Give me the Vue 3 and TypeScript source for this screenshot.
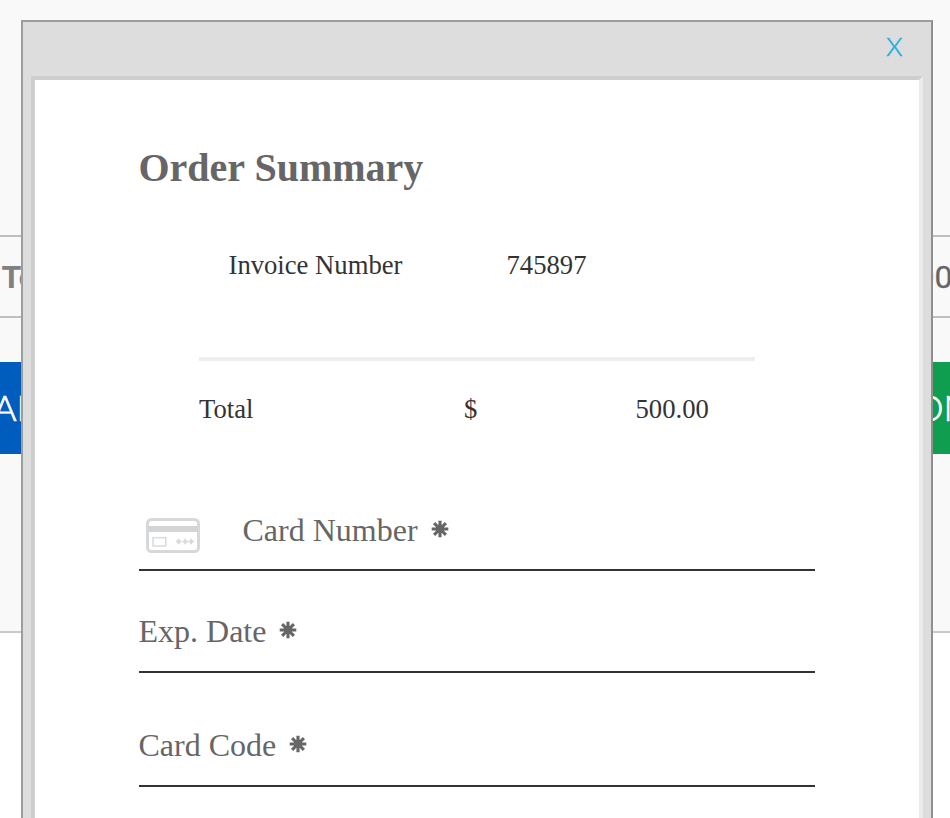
<script setup lang="ts">
interface Field {
  id: string
  label: string
  icon: boolean
}

const invoice = { label: 'Invoice Number', value: '745897' }
const total = { label: 'Total', currency: '$', amount: '500.00' }
const fields: Field[] = [
  { id: 'number', label: 'Card Number', icon: true },
  { id: 'expiry', label: 'Exp. Date', icon: false },
  { id: 'code', label: 'Card Code', icon: false },
]
</script>

<template>
  <div class="page">
    <section class="backdrop">
      <div class="total-row"><strong>To</strong><span>00</span></div>
      <div class="actions">
        <div class="action cancel">AN</div>
        <div class="action confirm">ON</div>
      </div>
    </section>

    <div class="modal">
      <header class="bar">
        <button class="close" type="button">X</button>
      </header>
      <main class="frame">
        <h1>Order Summary</h1>
        <div class="invoice">
          <span>{{ invoice.label }}</span>
          <span>{{ invoice.value }}</span>
        </div>
        <div class="total">
          <span>{{ total.label }}</span>
          <span>{{ total.currency }}</span>
          <span class="amount">{{ total.amount }}</span>
        </div>
        <form>
          <div v-for="field in fields" :key="field.id" class="field" :class="field.id">
            <svg v-if="field.icon" class="card" viewBox="0 0 54 35" fill="none">
              <rect x="1.5" y="1.5" width="51" height="32" rx="4" stroke="#d7d8da" stroke-width="3" />
              <path d="M2 8H52V14H2Z" fill="#d3d4d6" />
              <rect x="7" y="19.7" width="12.8" height="8.3" stroke="#dcdddf" stroke-width="1.6" />
              <path d="M30 23.5h5.4M32.7 20.8v5.4M36.5 23.5h5.4M39.2 20.8v5.4M42.5 23.5h5.4M45.2 20.8v5.4" stroke="#d7d8da" stroke-width="1.8" />
            </svg>
            <label>{{ field.label }}</label>
            <svg class="required" viewBox="-9 -9 18 18" fill="#666">
              <path
                v-for="n in 8"
                :key="n"
                d="M-1.4 0L-1.6 -8.3H1.6L1.4 0Z"
                :transform="`rotate(${n * 45})`"
              />
              <circle r="4.4" />
            </svg>
          </div>
        </form>
      </main>
    </div>
  </div>
</template>

<style>
body {
  margin: 0;
  background: #fff;
}
</style>

<style scoped>
.page {
  position: relative;
  width: 950px;
  height: 818px;
  overflow: hidden;
  background: #fff;
}
.backdrop {
  box-sizing: border-box;
  height: 633px;
  padding-top: 235px;
  border-bottom: 2px solid #c9c9c9;
  background: #f9f9f9;
}
.total-row {
  display: flex;
  justify-content: space-between;
  box-sizing: border-box;
  width: 952.5px;
  height: 83px;
  padding-left: 1.5px;
  border-top: 2px solid #bfbfbf;
  border-bottom: 2px solid #bfbfbf;
  font: 400 32px/80px Roboto, sans-serif;
  color: #666;
}
.total-row span {
  -webkit-text-stroke: 0.3px #666;
}
.total-row strong {
  font-weight: 700;
  color: #808080;
}
.actions {
  display: flex;
  justify-content: space-between;
  margin-top: 44px;
}
.action {
  box-sizing: border-box;
  width: 100px;
  height: 92px;
  overflow: hidden;
  font: 300 36px/90px Lato, sans-serif;
  color: #fff;
  -webkit-text-stroke: 0.7px #fff;
}
.cancel {
  background: #005cbd;
  text-indent: -7px;
}
.confirm {
  padding-left: 65px;
  background: #0f9d4f;
  white-space: nowrap;
}
.modal {
  position: absolute;
  top: 20px;
  left: 21px;
  display: flex;
  flex-direction: column;
  box-sizing: border-box;
  width: 912px;
  height: 820px;
  padding: 0 8px;
  border: 2px solid;
  border-color: #9d9d9d #8f8f8f #8f8f8f #9d9d9d;
  background: #ddd;
}
.bar {
  display: flex;
  justify-content: flex-end;
  height: 54px;
  padding-right: 20.5px;
}
.close {
  height: 48px;
  padding: 0;
  border: 0;
  background: none;
  font: 300 26px/48px Lato, sans-serif;
  color: #1eb0dc;
  -webkit-text-stroke: 0.5px #1eb0dc;
}
.frame {
  flex: 1;
  padding: 65px 104px 0;
  border: 4px solid;
  border-color: #cecece #ebebeb #ebebeb #cecece;
  background: #fff;
  font-family: "Liberation Serif", serif;
}
h1 {
  margin: 0 0 0 -0.5px;
  font-size: 40px;
  line-height: 46px;
  color: #666;
}
.invoice,
.total {
  display: grid;
  margin-left: 60px;
  font-size: 26.67px;
  line-height: 30px;
  color: #333;
}
.invoice {
  grid-template-columns: 278px 1fr;
  width: 526px;
  margin-top: 59px;
  padding-left: 29.5px;
}
.total {
  grid-template-columns: 265px 1fr 119.5px;
  width: 556px;
  margin-top: 77px;
  padding-top: 33px;
  border-top: 4px solid #eee;
}
.amount {
  justify-self: start;
}
form {
  padding-top: 85px;
}
.field {
  display: flex;
  align-items: flex-start;
  box-sizing: border-box;
  width: 676px;
  height: 62px;
  border-bottom: 2px solid #333;
  font-size: 32px;
  line-height: 38px;
  color: #666;
}
.field.number label {
  margin-top: 2px;
}
.field.expiry {
  margin-top: 40px;
}
.field.code {
  margin-top: 52px;
}
.field + .field {
  padding-top: 1px;
}
.field + .field label {
  margin-left: -0.5px;
}
.card {
  flex: none;
  width: 54px;
  height: 35px;
  margin: 9px 42.5px 0 7px;
}
.required {
  width: 18px;
  height: 18px;
  margin: 9px 0 0 13px;
}
.number .required {
  margin-top: 11px;
}
</style>
